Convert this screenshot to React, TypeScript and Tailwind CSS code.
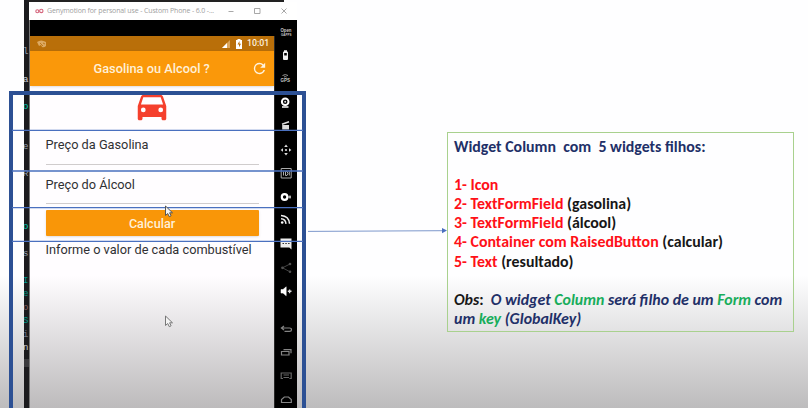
import React from "react";

const glyphs = [
  { c: "l", y: 46, color: "text-gray-400" },
  { c: "a", y: 74, color: "text-gray-300" },
  { c: "o", y: 101, color: "text-teal-400" },
  { c: "e", y: 141, color: "text-gray-400" },
  { c: "R", y: 168, color: "text-gray-400" },
  { c: "o", y: 221, color: "text-teal-400" },
  { c: "s", y: 248, color: "text-gray-400" },
  { c: "I", y: 275, color: "text-teal-600" },
  { c: "e", y: 288, color: "text-teal-600" },
  { c: "o", y: 302, color: "text-[#8c6060]" },
  { c: "S", y: 315, color: "text-teal-600" },
  { c: "i", y: 329, color: "text-gray-500" },
  { c: "n", y: 342, color: "text-gray-300" },
];

function EditorStrip() {
  return (
    <div className="relative h-full w-[5px] shrink-0 overflow-hidden bg-[#1b1b1e]">
      {glyphs.map((g) => (
        <span
          key={g.y}
          className={`absolute -left-px font-['Liberation_Mono',monospace] text-[9px] leading-[12px] ${g.color}`}
          style={{ top: g.y }}
        >
          {g.c}
        </span>
      ))}
      <div className="mt-[359px] h-[8px] bg-[#3a3a3d]" />
    </div>
  );
}

function TitleBar() {
  return (
    <div className="flex h-[18px] shrink-0 items-center bg-white text-[#999]">
      <svg className="ml-[6px] h-[6px] w-[9px]" viewBox="0 0 9 6" fill="none" stroke="#d5657c" strokeWidth="1.1">
        <circle cx="2.300" cy="3.200" r="1.500" />
        <circle cx="6.300" cy="2.900" r="1.700" />
      </svg>
      <span className="ml-[3px] w-[170px] whitespace-nowrap font-['Open_Sans',sans-serif] text-[7px] leading-[18px] tracking-[-0.140px] text-[#a0a0a0]">
        Genymotion for personal use - Custom Phone - 6.0 -...
      </span>
      <svg className="h-[18px] w-[70px]" viewBox="217 2 70 18" fill="none" stroke="#929292" strokeWidth=".8">
        <path d="M228.500 11.500h5M254.500 8.500h5.500v5h-5.500zM281.500 8.500l5 5M286.500 8.500l-5 5" />
      </svg>
    </div>
  );
}

function ToolIcons() {
  return (
    <svg className="h-[388px] w-[23px]" viewBox="274 20 23 388" fill="none" stroke="#ddd" strokeWidth="1">
      <path d="M274.500 36v372" stroke="#333" strokeWidth=".8" />
      <g fill="#c8c8c8" stroke="none" className="font-['Liberation_Sans',sans-serif] font-bold">
        <text x="280.500" y="32" fontSize="5" textLength="11" lengthAdjust="spacingAndGlyphs">Open</text>
        <text x="281" y="35.500" fontSize="3.200" textLength="10.500" lengthAdjust="spacingAndGlyphs">GAPPS</text>
        <text x="280.500" y="82.300" fontSize="4.800" textLength="9.500" lengthAdjust="spacingAndGlyphs">GPS</text>
      </g>
      <path d="M283 52.500a1 1 0 0 1 1-1v-1.200h3v1.200a1 1 0 0 1 1 1v6.500a1 1 0 0 1-1 1h-3a1 1 0 0 1-1-1z" fill="#eee" stroke="none" />
      <path d="M284.200 53h2.600v2.500h-2.600z" fill="#000" stroke="none" />
      <path d="M282.500 75.500q2.800-1.800 5.500 0M284 77q1.300-.8 2.600 0" stroke="#999" />
      <circle cx="285.200" cy="101.700" r="3.300" stroke="#fff" strokeWidth="2" />
      <circle cx="285.200" cy="101.700" r="1" fill="#ddd" stroke="none" />
      <path d="M282 107h6.500" stroke="#eee" strokeWidth="1.600" />
      <path d="M282.200 125h6.800v4.500h-6.800z" fill="#ddd" stroke="none" />
      <path d="M282 124.200l7-2.500" strokeWidth="1.500" />
      <g fill="#ddd" stroke="none">
        <circle cx="286" cy="150" r="1.100" />
        <path d="M284.200 147l1.800-2.400 1.800 2.400zM284.200 153l1.800 2.400 1.800-2.400zM283 148.200l-2.400 1.800 2.400 1.800zM289 148.200l2.400 1.800-2.400 1.800z" />
      </g>
      <path d="M281.200 168.500h10v9.500h-10z" stroke="#aaa" />
      <path d="M283.500 171.500v4M285.500 171.500h1.500q2 2 0 4h-1.500zM289.300 171.500v4" stroke="#aaa" />
      <circle cx="284.600" cy="197" r="2.800" stroke="#fff" strokeWidth="2.200" />
      <path d="M288 197h3M290 195.500v3" stroke="#ddd" strokeWidth="1.200" />
      <circle cx="282.200" cy="222.500" r="1.300" fill="#fff" stroke="none" />
      <path d="M281 218.800q4.500.3 5 5M281 215.600q8 .5 8.500 8.200" stroke="#eee" strokeWidth="1.500" />
      <path d="M280.500 238.500h11v11l-2.200-2h-8.800z" fill="#eee" stroke="none" />
      <path d="M282.500 243.500h7.500" stroke="#333" strokeDasharray="1.500 1.300" />
      <path d="M290 264l-7.500 3.800 7.500 4" stroke="#444" />
      <g fill="#505050" stroke="none"><circle cx="290" cy="264" r="1.300" /><circle cx="282.500" cy="267.800" r="1.400" /><circle cx="290" cy="271.800" r="1.300" /></g>
      <path d="M281 289.500h2l3.200-2.700v9l-3.200-2.700h-2z" fill="#fff" stroke="#fff" strokeWidth=".5" />
      <path d="M287.800 291.300h3.700M289.600 289.500v3.700" stroke="#ddd" strokeWidth="1.400" />
      <g stroke="#858585" strokeWidth="1.200">
        <path d="M284 326l-2.600 2 2.600 2M281.500 328h8q2 0 2 1.700t-2 1.700h-5" />
        <path d="M281.500 351.500h7.500v3.500h-7.500zM283.500 349.700h7.500v3.500" />
        <path d="M283 378.500h-1.800v-5.500h10v5.500h-1.800M283.500 375h5.500M283.500 377.500h5.500" stroke="#666" />
        <path d="M281.500 402.500v-3l2.800-2.500h4.200l2.800 2.500v3z" />
      </g>
    </svg>
  );
}

function StatusBar() {
  return (
    <div className="flex h-[15px] shrink-0 items-center bg-[#b96f09] text-white">
      <svg className="ml-[7px] h-[8px] w-[10px]" viewBox="0 0 10 8" fill="#dca962">
        <path d="M0 2q4-3 9 0v4q-2 2-4 1L4 5 2 6z" />
        <path d="M3 3l3 3M6 3l2 1" stroke="#b96f09" strokeWidth=".8" />
      </svg>
      <svg className="ml-auto h-[12px] w-[22px]" viewBox="0 0 22 12">
        <path d="M0 10L8 2v8z" fill="#dba760" />
        <path d="M0 10l5-5v5z" fill="#fff" />
        <path d="M14 2h1.500V1h3v1H20v9h-6z" fill="#fff" />
        <path d="M17.500 3l-2 3.500H17v2.700l2-3.500h-1.500z" fill="#b96f09" />
      </svg>
      <span className="ml-[3px] mr-[5px] w-[22px] whitespace-nowrap font-[Roboto,sans-serif] text-[8.800px] font-medium leading-[15px] text-[#fff0dc]">10:01</span>
    </div>
  );
}

function Field({ label, className }: { label: string; className: string }) {
  return (
    <div className={`ml-[15.500px] mr-[15.500px] border-b border-[#d0cccd] ${className}`}>{label}</div>
  );
}

function Phone() {
  return (
    <div className="flex h-full w-[268px] shrink-0 flex-col">
      <div className="h-[2px] w-[255px] shrink-0 bg-[#222]" />
      <TitleBar />
      <div className="flex min-h-0 flex-1 bg-black">
        <div className="flex w-[245px] shrink-0 flex-col border-l border-[#777] pt-4">
          <StatusBar />
          <header className="z-10 flex h-[35px] shrink-0 items-center bg-[#fa980a] text-white shadow-sm">
            <h1 className="ml-[63.500px] whitespace-nowrap pt-px font-[Roboto,sans-serif] text-[12.750px] font-medium leading-[34px] tracking-[0.020px] text-[#fff0d8]">Gasolina ou Alcool ?</h1>
            <svg className="ml-auto mr-[6px] h-[17px] w-[17px]" viewBox="0 0 24 24" fill="#fff3df">
              <path d="M17.650 6.350A7.960 7.960 0 0 0 12 4a8 8 0 1 0 7.730 10h-2.080A6 6 0 1 1 12 6c1.660 0 3.140.69 4.220 1.780L13 11h7V4z" />
            </svg>
          </header>
          <main className="flex flex-1 flex-col bg-[linear-gradient(#fffdff_0px,#fffdff_190px,#bdbbbc_322px)] font-[Roboto,sans-serif] text-[12.750px] leading-[18px] text-[#303033]">
            <svg className="ml-[103px] mt-[0.500px] h-[38px] w-[38px]" viewBox="0 0 24 24" fill="#f5402d">
              <path d="M18.920 6.010C18.720 5.420 18.160 5 17.500 5h-11c-.66 0-1.210.42-1.420 1.010L3 12v8c0 .55.45 1 1 1h1c.55 0 1-.45 1-1v-1h12v1c0 .55.45 1 1 1h1c.55 0 1-.45 1-1v-8zM6.500 16a1.500 1.500 0 1 1 0-3 1.500 1.500 0 0 1 0 3zm11 0a1.500 1.500 0 1 1 0-3 1.500 1.500 0 0 1 0 3zM5 11l1.500-4.500h11L19 11z" />
            </svg>
            <Field label="Preço da Gasolina" className="mt-[11.500px] h-[29px]" />
            <Field label="Preço do Álcool" className="mt-[10.500px] h-[28.500px]" />
            <button className="ml-[15.500px] mr-[15.500px] mt-[6px] h-[26px] rounded-[1px] bg-[#f99608] pt-px text-center text-[12.600px] font-medium leading-[25px] text-[#fff0d8] shadow-sm">Calcular</button>
            <p className="ml-[15.500px] mt-[5px] whitespace-nowrap">Informe o valor de cada combustível</p>
          </main>
        </div>
        <ToolIcons />
      </div>
    </div>
  );
}

function Cursor({ className, stroke }: { className: string; stroke: string }) {
  return (
    <svg className={`absolute h-[13px] w-[10px] ${className}`} viewBox="0 0 10 13">
      <path d="M1.500 1v9.500l2.200-2 1.600 3.200 1.800-.9-1.500-3H8.500z" fill="#f4f4f4" stroke={stroke} strokeWidth="1" />
    </svg>
  );
}

function Annotations() {
  return (
    <div className="pointer-events-none absolute inset-0 overflow-hidden">
      <div className="absolute left-[9px] top-[90.500px] h-[330px] w-[297px] border-4 border-[#2c5094]" />
      <svg className="absolute inset-0 h-[408px] w-[808px]" viewBox="0 0 808 408">
        <path d="M12 130.300H303M12 171H303M12 207.600H303M12 241.400H303" stroke="#4a70bf" strokeWidth="1.300" />
        <path d="M308 231.400L443 230.700" stroke="#7d98cc" strokeWidth="1" />
        <path d="M442 228l5 2.600-5 2.700z" fill="#4a70bf" />
      </svg>
      <Cursor className="left-[163.500px] top-[205px]" stroke="#555" />
      <Cursor className="left-[163.500px] top-[315px]" stroke="#777" />
    </div>
  );
}

function Notes() {
  return (
    <section className="ml-[150px] mt-[132px] h-[200px] w-[347px] shrink-0 whitespace-pre border border-[#a9d18e] pl-[6px] pt-[4px] font-[Carlito,Lato,sans-serif] text-[15.900px] font-bold leading-[19.100px] text-[#ff1018]">
      <p className="text-[#1f3068]">Widget Column  com  5 widgets filhos:</p>
      <p> </p>
      <p>1- Icon</p>
      <p>2- TextFormField <span className="text-[#171717]">(gasolina)</span></p>
      <p>3- TextFormField <span className="text-[#171717]">(álcool)</span></p>
      <p>4- Container com RaisedButton <span className="text-[#171717]">(calcular)</span></p>
      <p>5- Text <span className="text-[#171717]">(resultado)</span></p>
      <p> </p>
      <p className="italic text-[#1f3068]"><span className="text-[#171717]">Obs</span><span className="not-italic text-[#171717]">:</span>  O widget <span className="text-[#18ad5b]">Column</span> será filho de um <span className="text-[#18ad5b]">Form</span> com</p>
      <p className="italic text-[#1f3068]">um <span className="text-[#18ad5b]">key</span> (GlobalKey)</p>
    </section>
  );
}

export default function App() {
  return (
    <div className="relative flex h-[408px] w-[808px] items-start overflow-hidden bg-[linear-gradient(#fefeff_0px,#fefeff_275px,#bdbcbd_408px)] pl-6">
      <EditorStrip />
      <Phone />
      <Notes />
      <Annotations />
    </div>
  );
}
